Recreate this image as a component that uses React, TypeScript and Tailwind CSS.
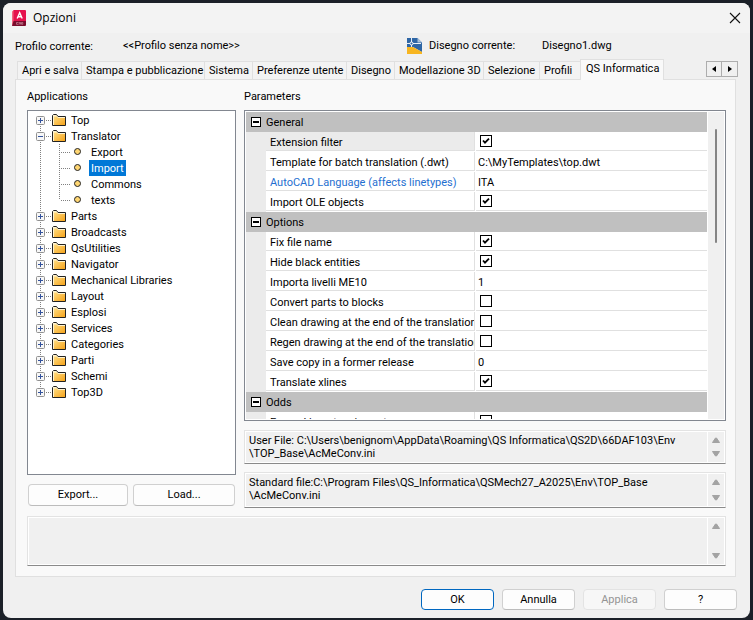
import React from "react";

type Tab = {
  label: string;
  width: string;
  active?: boolean;
};

type TreeItem = {
  label: string;
  open?: boolean;
  children?: string[];
};

type Param = {
  name: string;
  value: string | boolean;
  state?: "selected" | "link";
};

type ParamGroup = {
  title: string;
  params: Param[];
};

const TABS: Tab[] = [
  { label: "Apri e salva", width: "w-16" },
  { label: "Stampa e pubblicazione", width: "w-[123px]" },
  { label: "Sistema", width: "w-12" },
  { label: "Preferenze utente", width: "w-[94px]" },
  { label: "Disegno", width: "w-12" },
  { label: "Modellazione 3D", width: "w-[89px]" },
  { label: "Selezione", width: "w-14" },
  { label: "Profili", width: "w-[41px]" },
  { label: "QS Informatica", width: "w-[84px]", active: true },
];

const TREE: TreeItem[] = [
  { label: "Top" },
  {
    label: "Translator",
    open: true,
    children: ["Export", "Import", "Commons", "texts"],
  },
  { label: "Parts" },
  { label: "Broadcasts" },
  { label: "QsUtilities" },
  { label: "Navigator" },
  { label: "Mechanical Libraries" },
  { label: "Layout" },
  { label: "Esplosi" },
  { label: "Services" },
  { label: "Categories" },
  { label: "Parti" },
  { label: "Schemi" },
  { label: "Top3D" },
];

const GROUPS: ParamGroup[] = [
  {
    title: "General",
    params: [
      { name: "Extension filter", value: true, state: "selected" },
      {
        name: "Template for batch translation (.dwt)",
        value: "C:\\MyTemplates\\top.dwt",
      },
      {
        name: "AutoCAD Language (affects linetypes)",
        value: "ITA",
        state: "link",
      },
      { name: "Import OLE objects", value: true },
    ],
  },
  {
    title: "Options",
    params: [
      { name: "Fix file name", value: true },
      { name: "Hide black entities", value: true },
      { name: "Importa livelli ME10", value: "1" },
      { name: "Convert parts to blocks", value: false },
      { name: "Clean drawing at the end of the translation", value: false },
      { name: "Regen drawing at the end of the translation", value: false },
      { name: "Save copy in a former release", value: "0" },
      { name: "Translate xlines", value: true },
    ],
  },
  {
    title: "Odds",
    params: [{ name: "Expand insert on import", value: false }],
  },
];

function AppLogo() {
  return (
    <svg width="14" height="16" viewBox="0 0 14 16" aria-hidden="true">
      <path d="M0 1.500 2 0v15l-2 .8z" fill="#f2667f" />
      <path d="M1.500 0H13a1 1 0 0 1 1 1v10H1.500z" fill="#e5124d" />
      <path d="M1.500 11H14v4a1 1 0 0 1-1 1H0z" fill="#7a0c2c" />
      <path d="M5.200 8.500 7.700 2.700l2.500 5.800M6.200 6.700h3" fill="none" stroke="#fff" strokeWidth="1.400" />
      <path d="M6.500 12.500h-2v1.800h2M7.300 14.500v-2h1.200v2M9.500 12.500h1.300v1.800H9.500z" fill="none" stroke="#d9a3b2" strokeWidth=".6" />
    </svg>
  );
}

function DrawingIcon() {
  return (
    <svg width="15" height="16" viewBox="0 0 15 16" aria-hidden="true">
      <path d="M0 0h10.500L15 4.500V14L6 9H0z" fill="#2f66a5" />
      <path d="M10.500 0 15 4.500h-4.500z" fill="#a9c0da" />
      <path d="M0 9h6l9 5v2H0z" fill="#f7b520" />
      <path d="M4.500 0v9M0 5.500h14" stroke="#e6eef7" strokeWidth="1" />
      <circle cx="4.500" cy="5.500" r="1.500" fill="#2f66a5" stroke="#fff" />
    </svg>
  );
}

function Folder() {
  return (
    <svg width="14" height="16" viewBox="0 0 14 16" aria-hidden="true">
      <defs>
        <linearGradient id="folder" x1="0" y1="0" x2="1" y2="1">
          <stop offset="0" stopColor="#ffdc80" />
          <stop offset="1" stopColor="#f5a31c" />
        </linearGradient>
      </defs>
      <path d="M.5 13.500v-10l1-1h3l1.500 2h7.500v9z" fill="#fff3d0" stroke="#222" />
      <path d="M2 4.500h3l1 1.500H13v7H2z" fill="url(#folder)" />
    </svg>
  );
}

function Expander({ item, first, last }: { item: TreeItem; first: boolean; last: boolean }) {
  return (
    <button type="button" aria-label={item.label} aria-expanded={!!item.open} className="flex">
      <svg width="16" height="16" viewBox="0 0 16 16" aria-hidden="true">
        <path
          d={`M4.500 ${first ? 8 : 0}V${last ? 8 : 16}`}
          stroke="#808080"
          strokeDasharray="1 1"
        />
        <path d="M10 8.500h6" stroke="#808080" strokeDasharray="1 1" />
        <rect x=".5" y="4.500" width="8" height="8" rx="1" fill="#f7f7f7" stroke="#919191" />
        <path d="M2 8.500h5" stroke="#33529c" />
        {!item.open && <path d="M4.500 6v5" stroke="#33529c" />}
      </svg>
    </button>
  );
}

function Leaf({ last }: { last: boolean }) {
  return (
    <svg width="46" height="16" viewBox="0 0 46 16" aria-hidden="true">
      <path d="M4.500 0v16" stroke="#808080" strokeDasharray="1 1" />
      <path d={`M23.500 0V${last ? 8 : 16}`} stroke="#808080" strokeDasharray="1 1" />
      <path d="M25 8.500h9" stroke="#808080" strokeDasharray="1 1" />
      <circle cx="41.500" cy="7.500" r="3" fill="#ffd672" stroke="#222" />
    </svg>
  );
}

function Tree() {
  return (
    <ul className="h-[365px] border border-[#828790] bg-white py-px pl-2">
      {TREE.map((item, i) => (
        <li key={item.label}>
          <div className="flex h-4">
            <Expander item={item} first={i === 0} last={i === TREE.length - 1} />
            <Folder />
            <span className="ml-1 px-px leading-[18px]">{item.label}</span>
          </div>
          {item.children && (
            <ul>
              {item.children.map((child, j) => (
                <li key={child} className="flex h-4">
                  <Leaf last={j === item.children!.length - 1} />
                  <span
                    className={
                      child === "Import"
                        ? "ml-[7px] bg-[#0078d7] px-0.5 leading-[18px] text-white"
                        : "ml-[7px] px-0.5 leading-[18px]"
                    }
                  >
                    {child}
                  </span>
                </li>
              ))}
            </ul>
          )}
        </li>
      ))}
    </ul>
  );
}

function Check({ label, checked }: { label: string; checked: boolean }) {
  return (
    <span className="mt-[3px] ml-1 grid size-3">
      <input
        type="checkbox"
        aria-label={label}
        defaultChecked={checked}
        className="peer col-start-1 row-start-1 size-3 appearance-none border border-black bg-white"
      />
      <svg
        viewBox="0 0 12 12"
        className="pointer-events-none invisible col-start-1 row-start-1 size-3 peer-checked:visible"
        aria-hidden="true"
      >
        <path d="M3 5.500 5 7.700 9 3.700" fill="none" stroke="#000" strokeWidth="1.800" />
      </svg>
    </span>
  );
}

function ParamRow({ param }: { param: Param }) {
  const nameClass =
    param.state === "selected"
      ? "bg-[#ebebeb]"
      : param.state === "link"
        ? "text-[#1f6fd0]"
        : "";

  return (
    <tr className="h-5">
      <td className="bg-[#ebebeb] p-0"></td>
      <th scope="row" className="p-0 text-left align-top font-normal">
        <div
          className={`h-[19px] overflow-hidden border-r border-b border-[#e0e0e0] pl-1 leading-[22px] whitespace-nowrap ${nameClass}`}
        >
          {param.name}
        </div>
      </th>
      <td className="p-0 pl-px align-top">
        <div className="h-[19px] border-b border-[#e0e0e0]">
          {typeof param.value === "boolean" ? (
            <div className="flex">
              <Check label={param.name} checked={param.value} />
            </div>
          ) : (
            <input
              type="text"
              aria-label={param.name}
              defaultValue={param.value}
              className="block h-[18px] w-full pt-[3px] pl-0.5"
            />
          )}
        </div>
      </td>
    </tr>
  );
}

function ParamGrid() {
  return (
    <div className="flex h-[311px] overflow-hidden border border-[#828790] bg-white p-px">
      <div className="min-w-0 flex-1 overflow-hidden">
        <table className="w-full table-fixed border-collapse">
          <colgroup>
            <col className="w-5" />
            <col className="w-[209px]" />
            <col />
          </colgroup>
          {GROUPS.map((group) => (
            <tbody key={group.title}>
              <tr className="h-5 bg-[#c0c0c0]">
                <th colSpan={3} scope="rowgroup" className="p-0 text-left font-normal">
                  <div className="flex h-5 items-center gap-[5px] pl-[5px]">
                    <button
                      type="button"
                      aria-label={group.title}
                      className="flex size-[10px] items-center justify-center border border-black bg-white"
                    >
                      <span className="h-0.5 w-1.5 bg-black"></span>
                    </button>
                    <span className="pt-0.5">{group.title}</span>
                  </div>
                </th>
              </tr>
              {group.params.map((param) => (
                <ParamRow key={param.name} param={param} />
              ))}
            </tbody>
          ))}
        </table>
      </div>
      <div className="ml-px w-4 bg-[#f0f0f0] pt-[17px]">
        <div className="mx-auto h-[114px] w-0.5 rounded-full bg-[#858585]"></div>
      </div>
    </div>
  );
}

function ScrollArrow({ down }: { down?: boolean }) {
  return (
    <svg width="10" height="8" viewBox="0 0 10 8" aria-hidden="true">
      <path
        d={down ? "M1.500 1.500h7L5.500 6h-1z" : "M1.500 6.500h7L5.500 2h-1z"}
        fill="#a3a3a3"
        stroke="#a3a3a3"
        strokeLinejoin="round"
      />
    </svg>
  );
}

function InfoBox({ label, text, height }: { label: string; text: string; height: string }) {
  return (
    <div
      className={`flex border border-t-[#e3e3e3] border-r-[#e3e3e3] border-b-[#8a8a8a] border-l-[#e3e3e3] bg-white p-px ${height}`}
    >
      <textarea
        readOnly
        aria-label={label}
        defaultValue={text}
        className="min-w-0 flex-1 resize-none overflow-hidden bg-[#f0f0f0] pt-0.5 pl-[3px] leading-[13px]"
      />
      <div className="ml-px flex w-4 flex-col items-center justify-between bg-[#f0f0f0] py-1">
        <ScrollArrow />
        <ScrollArrow down />
      </div>
    </div>
  );
}

function DialogButton({ children, kind = "normal" }: { children: React.ReactNode; kind?: "normal" | "default" | "disabled" }) {
  const border =
    kind === "default"
      ? "border-[#0067c0] bg-[#fdfdfd]"
      : kind === "disabled"
        ? "border-[#e3e3e3] bg-[#f7f7f7] text-[#949494]"
        : "border-[#d0d0d0] border-b-[#bcbcbc] bg-[#fdfdfd]";

  return (
    <button
      type="button"
      disabled={kind === "disabled"}
      className={`h-[21px] w-[73px] rounded-sm border pt-px text-[11px] leading-4 ${border}`}
    >
      {children}
    </button>
  );
}

export default function App() {
  return (
    <div className="min-h-screen bg-[#1b2028] p-[3px] font-[Roboto,sans-serif] text-[11px] text-black">
      <main className="overflow-hidden rounded-lg bg-[#f0f0f0]">
        {/* Title bar */}
        <header className="flex h-[30px] items-center bg-[#f3f3f3] pr-[9px] pl-[9px]">
          <AppLogo />
          <h1 className="ml-[7px] font-['Open_Sans',sans-serif] text-[12px]">Opzioni</h1>
          <button type="button" aria-label="Chiudi" className="ml-auto flex">
            <svg width="12" height="12" viewBox="0 0 12 12" aria-hidden="true">
              <path d="M1 1l10 10M11 1 1 11" stroke="#111" strokeWidth="1.100" />
            </svg>
          </button>
        </header>

        <div className="px-3 pb-2">
          {/* Current profile and drawing */}
          <div className="flex h-[25px] items-center">
            <span className="w-[108px] pt-1">Profilo corrente:</span>
            <span className="w-[284px] pt-0.5">&lt;&lt;Profilo senza nome&gt;&gt;</span>
            <DrawingIcon />
            <span className="ml-[7px] w-[113px] pt-0.5">Disegno corrente:</span>
            <span className="pt-0.5">Disegno1.dwg</span>
          </div>

          {/* Tabs */}
          <div role="tablist" className="flex h-[21px] items-end pl-0.5">
            {TABS.map((tab) => (
              <button
                key={tab.label}
                type="button"
                role="tab"
                aria-selected={!!tab.active}
                className={
                  tab.active
                    ? `relative -mb-px h-[21px] shrink-0 border border-b-0 border-[#e0e0e0] bg-[#f9f9f9] pb-0.5 pl-[5px] text-left whitespace-nowrap ${tab.width}`
                    : `h-[18px] shrink-0 border-t border-l border-[#e0e0e0] bg-[#f3f3f3] pt-px pl-1 text-left whitespace-nowrap ${tab.width}`
                }
              >
                {tab.label}
              </button>
            ))}
            <div className="mb-0.5 ml-auto flex">
              <button type="button" aria-label="Indietro" className="flex size-4 items-center justify-center border border-[#adadad] bg-[#f0f0f0]">
                <svg width="4" height="6" viewBox="0 0 4 6" aria-hidden="true">
                  <path d="M4 0v6L0 3z" />
                </svg>
              </button>
              <button type="button" aria-label="Avanti" className="flex size-4 items-center justify-center border border-l-0 border-[#adadad] bg-[#f0f0f0]">
                <svg width="4" height="6" viewBox="0 0 4 6" aria-hidden="true">
                  <path d="M0 0v6l4-3z" />
                </svg>
              </button>
            </div>
          </div>

          {/* Tab page */}
          <section className="mr-0.5 border border-[#e0e0e0] bg-[#f9f9f9] pt-[9px] pr-[9px] pb-[10px] pl-[11px]">
            <div className="flex gap-2">
              <div className="w-[209px]">
                <h2 className="mb-[5px] leading-4">Applications</h2>
                <Tree />
                <div className="mt-[9px] flex gap-[5px] px-px">
                  <button type="button" className="h-[22px] w-[100px] rounded-sm border border-[#d0d0d0] border-b-[#bcbcbc] bg-[#fdfdfd] pt-px">
                    Export...
                  </button>
                  <button type="button" className="h-[22px] flex-1 rounded-sm border border-[#d0d0d0] border-b-[#bcbcbc] bg-[#fdfdfd] pt-px">
                    Load...
                  </button>
                </div>
              </div>

              <div className="min-w-0 flex-1">
                <h2 className="mb-[5px] leading-4">Parameters</h2>
                <ParamGrid />
                <div className="mt-[9px] flex flex-col gap-2">
                  <InfoBox
                    label="User File"
                    height="h-[34px]"
                    text={
                      "User File: C:\\Users\\benignom\\AppData\\Roaming\\QS Informatica\\QS2D\\66DAF103\\Env\n\\TOP_Base\\AcMeConv.ini"
                    }
                  />
                  <InfoBox
                    label="Standard file"
                    height="h-9"
                    text={
                      "Standard file:C:\\Program Files\\QS_Informatica\\QSMech27_A2025\\Env\\TOP_Base\n\\AcMeConv.ini"
                    }
                  />
                </div>
              </div>
            </div>
            <div className="mt-2">
              <InfoBox label="Descrizione" height="h-[50px]" text="" />
            </div>
          </section>

          {/* Dialog buttons */}
          <footer className="mt-3 mr-px flex justify-end gap-2">
            <DialogButton kind="default">OK</DialogButton>
            <DialogButton>Annulla</DialogButton>
            <DialogButton kind="disabled">Applica</DialogButton>
            <DialogButton>?</DialogButton>
          </footer>
        </div>
      </main>
    </div>
  );
}
